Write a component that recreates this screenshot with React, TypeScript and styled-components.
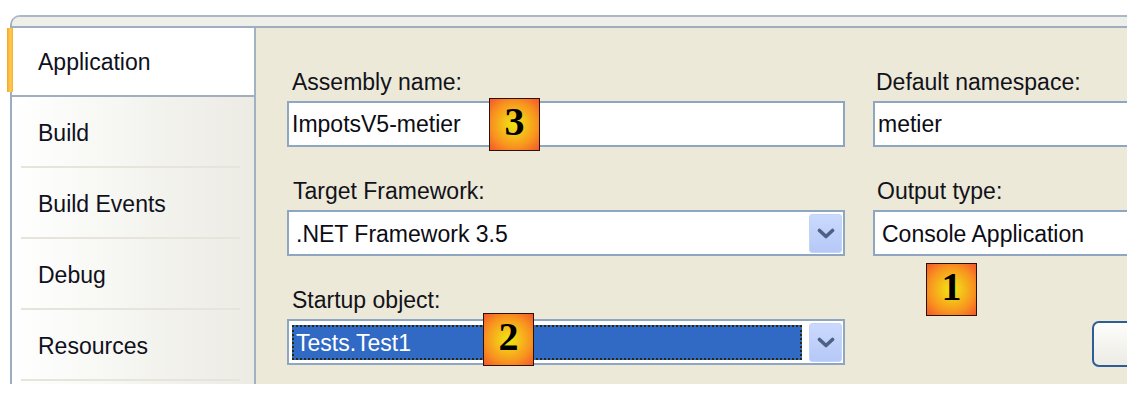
import React from "react";
import styled, { createGlobalStyle } from "styled-components";

const Global = createGlobalStyle`
  html, body { margin: 0; padding: 0; background: #ffffff; }
  body { font-family: "Liberation Sans", Arial, sans-serif; }
  * { box-sizing: border-box; }
`;

const Viewport = styled.div`
  width: 1127px;
  height: 384px;
  overflow: hidden;
`;

const Frame = styled.div`
  margin: 15px 0 0 10px;
  width: 1117px;
  height: 369px;
  border-top: 2px solid #a9b7c7;
  border-left: 2px solid #9eacbf;
  border-top-left-radius: 10px;
  display: flex;
  flex-direction: column;
`;

const TopStrip = styled.div`
  flex: 0 0 auto;
  height: 11px;
  background: #efefea;
  border-bottom: 2px solid #a0aec0;
  border-top-left-radius: 8px;
`;

const Body = styled.div`
  flex: 1;
  display: flex;
  min-height: 0;
`;

const TabColumn = styled.div`
  flex: 0 0 244px;
  border-right: 2px solid #a3b1c4;
  background: linear-gradient(to right, #ffffff 0%, #f6f6f2 45%, #ecebe4 100%);
  display: flex;
  flex-direction: column;
`;

const Tab = styled.div<{ $active?: boolean }>`
  position: relative;
  flex: 0 0 auto;
  height: 69px;
  padding: ${(p) => (p.$active ? "2px" : "4px")} 0 0 26px;
  display: flex;
  align-items: center;
  font-size: 23px;
  color: #10101c;
  white-space: nowrap;
  background: ${(p) => (p.$active ? "#ffffff" : "transparent")};
  border-bottom: ${(p) => (p.$active ? "2px solid #a0aec0" : "none")};

  &::before {
    content: "";
    display: ${(p) => (p.$active ? "block" : "none")};
    position: absolute;
    left: -5px;
    top: 0;
    bottom: 3px;
    width: 6px;
    background: linear-gradient(to right, #f3a52a, #ffcb4f 55%, #f6b238);
  }
`;

const Divider = styled.div`
  flex: 0 0 2px;
  margin: 0 14px 0 9px;
  background: #e6e4db;
`;

const Panel = styled.div`
  position: relative;
  flex: 1;
  min-width: 0;
  background: #ece9d8;
  padding: 41px 0 0 31px;
`;

const Grid = styled.div`
  display: grid;
  grid-template-columns: 558px 558px;
  column-gap: 28px;
  row-gap: 31px;
`;

const Field = styled.div`
  display: flex;
  flex-direction: column;
  gap: 6px;
`;

const Label = styled.div<{ $inset: number }>`
  font-size: 23px;
  line-height: 26px;
  height: 26px;
  padding-left: ${(p) => p.$inset}px;
  color: #12121a;
  white-space: nowrap;
`;

const TextBox = styled.div`
  height: 46px;
  border: 2px solid #8fa6c2;
  background: #ffffff;
  padding: 1px 0 0 3px;
  display: flex;
  align-items: center;
  font-size: 23px;
  color: #0c0c14;
  white-space: nowrap;
`;

const Combo = styled.div`
  height: 46px;
  border: 2px solid #8fa6c2;
  background: #ffffff;
  padding: 2px 1px 1px 3px;
  display: flex;
  align-items: stretch;
`;

const Value = styled.div<{ $selected?: boolean }>`
  flex: 1;
  margin: 2px 7px 2px 0;
  padding: 1px 0 0 4px;
  display: flex;
  align-items: center;
  font-size: 23px;
  white-space: nowrap;
  color: ${(p) => (p.$selected ? "#ffffff" : "#0c0c14")};
  background: ${(p) => (p.$selected ? "#316ac5" : "transparent")};
  outline: ${(p) => (p.$selected ? "2px dotted #2a2a12" : "none")};
  outline-offset: -2px;
`;

const DropButton = styled.div`
  flex: 0 0 33px;
  border: 1px solid #c4d4f8;
  border-radius: 3px;
  background: linear-gradient(#cbd9fd, #b5c8f7);
  display: flex;
  align-items: center;
  justify-content: center;
`;

const PushButton = styled.div`
  margin: 2px 0 0 219px;
  width: 200px;
  height: 46px;
  border: 2px solid #2c5d95;
  border-radius: 7px;
  background: linear-gradient(#fdfdfb, #ecebe4);
`;

const Badge = styled.div`
  position: absolute;
  width: 51px;
  height: 53px;
  border: 1px solid #2a1208;
  background: radial-gradient(circle closest-corner at 50% 50%, #ebe80e 0%, #f5c219 30%, #f8921f 65%, #f3562a 100%);
  display: flex;
  align-items: center;
  justify-content: center;
  padding-bottom: 6px;
  font-family: "Liberation Serif", "Times New Roman", serif;
  font-weight: bold;
  font-size: 40px;
  color: #000000;
`;

const Chevron = () => (
  <svg width="18" height="11" viewBox="0 0 18 11">
    <polyline
      points="2.5,2.5 9,8.5 15.5,2.5"
      fill="none"
      stroke="#4d6185"
      strokeWidth="3.6"
      strokeLinejoin="round"
      strokeLinecap="round"
    />
  </svg>
);

export default function App() {
  return (
    <>
      <Global />
      <Viewport>
        <Frame>
          <TopStrip />
          <Body>
            <TabColumn>
              <Tab $active>Application</Tab>
              <Tab>Build</Tab>
              <Divider />
              <Tab>Build Events</Tab>
              <Divider />
              <Tab>Debug</Tab>
              <Divider />
              <Tab>Resources</Tab>
              <Divider />
            </TabColumn>
            <Panel>
              <Grid>
                <Field>
                  <Label $inset={5}>Assembly name:</Label>
                  <TextBox>ImpotsV5-metier</TextBox>
                </Field>
                <Field>
                  <Label $inset={3}>Default namespace:</Label>
                  <TextBox>metier</TextBox>
                </Field>
                <Field>
                  <Label $inset={6}>Target Framework:</Label>
                  <Combo>
                    <Value>.NET Framework 3.5</Value>
                    <DropButton>
                      <Chevron />
                    </DropButton>
                  </Combo>
                </Field>
                <Field>
                  <Label $inset={4}>Output type:</Label>
                  <Combo>
                    <Value>Console Application</Value>
                    <DropButton>
                      <Chevron />
                    </DropButton>
                  </Combo>
                </Field>
                <Field>
                  <Label $inset={5}>Startup object:</Label>
                  <Combo>
                    <Value $selected>Tests.Test1</Value>
                    <DropButton>
                      <Chevron />
                    </DropButton>
                  </Combo>
                </Field>
                <Field>
                  <Label $inset={3}>&nbsp;</Label>
                  <PushButton />
                </Field>
              </Grid>
              <Badge style={{ left: 233, top: 70 }}>3</Badge>
              <Badge style={{ left: 227, top: 285 }}>2</Badge>
              <Badge style={{ left: 670, top: 235 }}>1</Badge>
            </Panel>
          </Body>
        </Frame>
      </Viewport>
    </>
  );
}
